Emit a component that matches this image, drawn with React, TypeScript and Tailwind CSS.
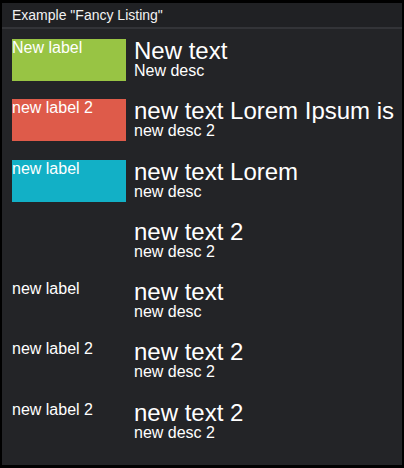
import React from "react";

type Row = { label?: string; color?: string; title: string; desc: string };

const rows: Row[] = [
  { label: "New label", color: "bg-[#98c444]", title: "New text", desc: "New desc" },
  { label: "new label 2", color: "bg-[#de5b4a]", title: "new text Lorem Ipsum is simply dummy text", desc: "new desc 2" },
  { label: "new label", color: "bg-[#12b0c6]", title: "new text Lorem", desc: "new desc" },
  { title: "new text 2", desc: "new desc 2" },
  { label: "new label", title: "new text", desc: "new desc" },
  { label: "new label 2", title: "new text 2", desc: "new desc 2" },
  { label: "new label 2", title: "new text 2", desc: "new desc 2" },
];

export default function App() {
  return (
    <div
      className="w-[404px] h-[468px] bg-black pt-[3px] pb-[3px] px-[2px] text-white"
      style={{ fontFamily: '"Liberation Sans", Arial, sans-serif' }}
    >
      <div className="h-full bg-[#232427] flex flex-col">
        <div className="h-[24px] bg-[#202124] px-[10px] text-[14px] leading-[24px] text-[#f2f2f2]">
          Example "Fancy Listing"
        </div>
        <div className="h-[2px] bg-[#333438]" />
        <div className="flex flex-col pt-[10px]">
          {rows.map((r, i) => (
            <div key={i} className="flex h-[60.3px] pl-[10px]">
              <div className={`w-[114px] h-[42px] shrink-0 ${r.color ?? ""}`}>
                {r.label && (
                  <div className="text-[16px] leading-[18px] whitespace-nowrap">{r.label}</div>
                )}
              </div>
              <div className="ml-[8px] flex-1 min-w-0 flex flex-col">
                <div className="text-[24px] leading-[24px] h-[24px] overflow-hidden">{r.title}</div>
                <div className="text-[16px] leading-[16px]">{r.desc}</div>
              </div>
            </div>
          ))}
        </div>
      </div>
    </div>
  );
}
